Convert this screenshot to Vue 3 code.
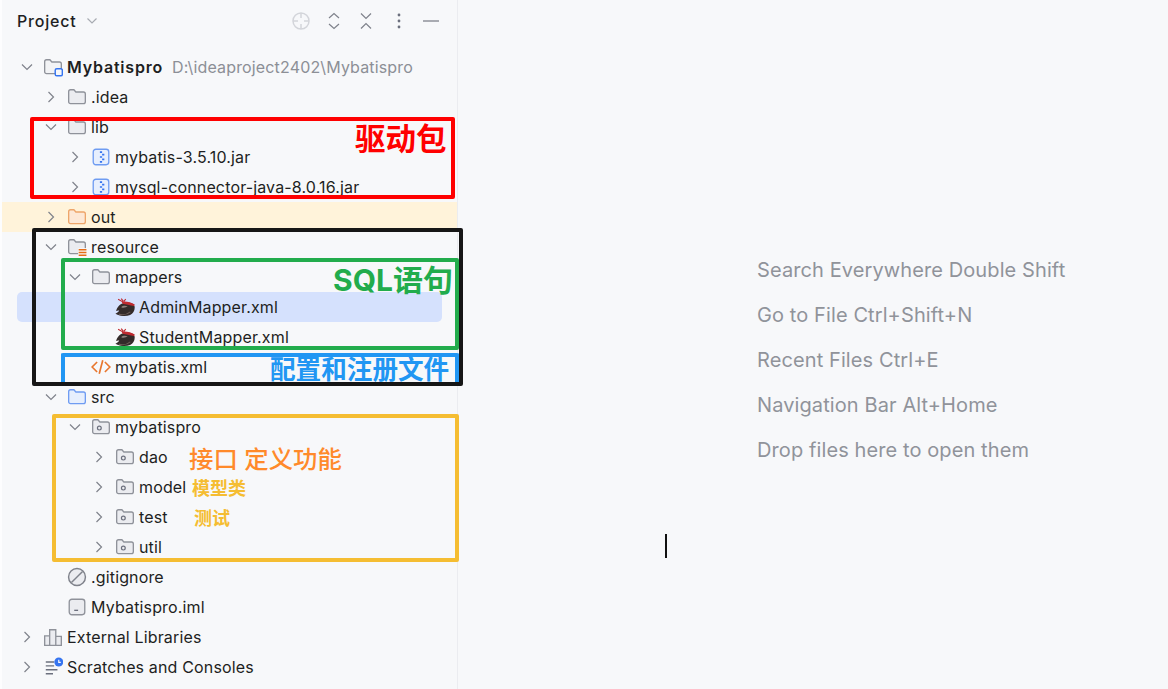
<script setup>
const rows = [
  { level: 0, open: true, icon: 'module', name: 'Mybatispro', bold: true, path: 'D:\\ideaproject2402\\Mybatispro' },
  { level: 1, open: false, icon: 'folder', name: '.idea' },
  { level: 1, open: true, icon: 'folder', name: 'lib' },
  { level: 2, open: false, icon: 'jar', name: 'mybatis-3.5.10.jar' },
  { level: 2, open: false, icon: 'jar', name: 'mysql-connector-java-8.0.16.jar' },
  { level: 1, open: false, icon: 'out', name: 'out', tint: true },
  { level: 1, open: true, icon: 'resource', name: 'resource' },
  { level: 2, open: true, icon: 'folder', name: 'mappers' },
  { level: 3, icon: 'bird', name: 'AdminMapper.xml', selected: true },
  { level: 3, icon: 'bird', name: 'StudentMapper.xml' },
  { level: 2, icon: 'xml', name: 'mybatis.xml' },
  { level: 1, open: true, icon: 'src', name: 'src' },
  { level: 2, open: true, icon: 'package', name: 'mybatispro' },
  { level: 3, open: false, icon: 'package', name: 'dao' },
  { level: 3, open: false, icon: 'package', name: 'model' },
  { level: 3, open: false, icon: 'package', name: 'test' },
  { level: 3, open: false, icon: 'package', name: 'util' },
  { level: 1, icon: 'ignore', name: '.gitignore' },
  { level: 1, icon: 'iml', name: 'Mybatispro.iml' },
  { level: 0, open: false, icon: 'libs', name: 'External Libraries' },
  { level: 0, open: false, icon: 'scratch', name: 'Scratches and Consoles' },
]
const hints = [
  'Search Everywhere Double Shift',
  'Go to File Ctrl+Shift+N',
  'Recent Files Ctrl+E',
  'Navigation Bar Alt+Home',
  'Drop files here to open them',
]
const folderPath = 'M1.5 4.2C1.5 3.3 2.2 2.5 3.2 2.5H6.2L8 4.5H14.8C15.8 4.5 16.5 5.2 16.5 6.2V13.3C16.5 14.3 15.8 15 14.8 15H3.2C2.2 15 1.5 14.3 1.5 13.3Z'
const rowIndent = (level) => ({ paddingLeft: 19 + level * 24 + 'px' })
</script>

<template>
  <div class="page">
    <aside class="side">
      <header class="head">
        <span class="title">Project</span>
        <svg class="title-caret" width="12" height="8" viewBox="0 0 12 8"><path d="M1.5 1.5L6 6L10.5 1.5" /></svg>
        <span class="spacer"></span>
        <div class="tools">
          <svg width="20" height="20" viewBox="0 0 20 20" class="locate"><circle cx="10" cy="10" r="8" /><path d="M10 2V7M10 13V18M2 10H7M13 10H18" /></svg>
          <svg width="14" height="20" viewBox="0 0 14 20" class="tool"><path d="M2 7L7 2.5L12 7M2 13L7 17.5L12 13" /></svg>
          <svg width="14" height="20" viewBox="0 0 14 20" class="tool"><path d="M2 2.5L7 7.5L12 2.5M2 17.5L7 12.5L12 17.5" /></svg>
          <svg width="4" height="16" viewBox="0 0 4 16" class="dots"><circle cx="2" cy="2" r="1.4" /><circle cx="2" cy="8" r="1.4" /><circle cx="2" cy="14" r="1.4" /></svg>
          <svg width="16" height="2" viewBox="0 0 16 2" class="minus"><path d="M0 1H16" /></svg>
        </div>
      </header>

      <div class="tree">
        <div
          v-for="row in rows"
          :key="row.name + row.level"
          class="row"
          :class="{ tint: row.tint, selected: row.selected }"
          :style="rowIndent(row.level)"
        >
          <span class="caret">
            <svg v-if="row.open === true" width="12" height="12" viewBox="0 0 12 12"><path d="M1 3.5L6 8.5L11 3.5" /></svg>
            <svg v-else-if="row.open === false" width="12" height="12" viewBox="0 0 12 12"><path d="M3.5 1L8.5 6L3.5 11" /></svg>
          </span>
          <svg class="ico" width="20" height="20" viewBox="0 0 18 18">
            <template v-if="row.icon === 'folder'">
              <path :d="folderPath" fill="#ebecf0" stroke="#8f929a" stroke-width="1.2" />
            </template>
            <template v-else-if="row.icon === 'module'">
              <path :d="folderPath" fill="#f2f3f5" stroke="#8f929a" stroke-width="1.2" />
              <rect x="11" y="10.5" width="6.4" height="6.4" rx="1.4" fill="#f7f8fa" stroke="#3574f0" stroke-width="1.3" />
            </template>
            <template v-else-if="row.icon === 'out'">
              <path :d="folderPath" fill="#fde8d6" stroke="#eea56a" stroke-width="1.2" />
            </template>
            <template v-else-if="row.icon === 'src'">
              <path :d="folderPath" fill="#e7effd" stroke="#6f9cf2" stroke-width="1.2" />
            </template>
            <template v-else-if="row.icon === 'resource'">
              <path :d="folderPath" fill="#ebecf0" stroke="#8f929a" stroke-width="1.2" />
              <rect x="10" y="10" width="8" height="8" fill="#f7f8fa" />
              <path d="M10.5 11.5H17.5M10.5 14H17.5M10.5 16.5H17.5" stroke="#e66d17" stroke-width="1.3" fill="none" />
            </template>
            <template v-else-if="row.icon === 'package'">
              <path :d="folderPath" fill="#ebecf0" stroke="#8f929a" stroke-width="1.2" />
              <circle cx="7.5" cy="10" r="1.7" fill="none" stroke="#6c707e" stroke-width="1.1" />
            </template>
            <template v-else-if="row.icon === 'jar'">
              <rect x="2" y="2" width="14" height="14" rx="2.4" fill="#e7effd" stroke="#6f9cf2" stroke-width="1.2" />
              <path d="M8 4.6H10M10 6.8H12M8 9H10M10 11.2H12M8 13.4H10" stroke="#3574f0" stroke-width="1.5" fill="none" />
            </template>
            <template v-else-if="row.icon === 'bird'">
              <path d="M0.4 15C2 14.4 3.2 13.4 3.8 12.2C2.8 12 1.8 12.2 1 12.6C2 9 4.8 5.8 8.8 5.2C12.4 4.6 16.6 5.2 17.6 8.4C18.2 11.6 16.6 14.8 13.6 16.2C10 17.6 4.4 17.4 0.4 15Z" fill="#332b2a" />
              <path d="M5.6 9.2C6.8 7.8 9 7.6 11.4 8.4C10 9.6 7.4 10.2 5.6 9.2Z" fill="#8f817d" />
              <path d="M6 4.2C9.5 3.6 14 4.2 17.8 6.8L17.2 8.2C13.6 7.2 9.4 6.6 6.8 6Z" fill="#bf2a30" />
              <path d="M7 4.4L2.8 2M7.6 4L5.6 1.4M8 4.2L9.6 1.8" stroke="#bf2a30" stroke-width="1" fill="none" />
              <path d="M3.4 15.4C7 16.4 11 15.8 13.8 13.4" stroke="#6b5a55" stroke-width="1" fill="none" />
            </template>
            <template v-else-if="row.icon === 'xml'">
              <path d="M5.5 4.5L1 9L5.5 13.5M12.5 4.5L17 9L12.5 13.5" stroke="#e8762d" stroke-width="1.5" fill="none" />
              <path d="M10.6 3L7.4 15" stroke="#e8762d" stroke-width="1.5" fill="none" />
            </template>
            <template v-else-if="row.icon === 'ignore'">
              <circle cx="9" cy="9" r="7.6" fill="#ebecf0" stroke="#7f828b" stroke-width="1.3" />
              <path d="M4 14L14 4" stroke="#7f828b" stroke-width="1.3" fill="none" />
            </template>
            <template v-else-if="row.icon === 'iml'">
              <rect x="2" y="2" width="14" height="14" rx="2.4" fill="#ebecf0" stroke="#8f929a" stroke-width="1.2" />
              <path d="M6.5 12H10" stroke="#6c707e" stroke-width="1.2" fill="none" />
            </template>
            <template v-else-if="row.icon === 'libs'">
              <path d="M1.5 8H6V16.5H1.5ZM6 2.5H11.5V16.5H6ZM11.5 8.5H16.5V16.5H11.5Z" fill="#ebecf0" stroke="#8f929a" stroke-width="1.2" />
            </template>
            <template v-else-if="row.icon === 'scratch'">
              <path d="M2.5 4.5H10M2.5 8H10M2.5 11.5H13M2.5 15H9" stroke="#6c707e" stroke-width="1.3" fill="none" />
              <circle cx="14.2" cy="4.5" r="4" fill="#3574f0" />
              <path d="M14.2 2.4V4.8H16" stroke="#fff" stroke-width="1" fill="none" />
            </template>
          </svg>
          <span class="name" :class="{ bold: row.bold }">{{ row.name }}</span>
          <span v-if="row.path" class="path">{{ row.path }}</span>
        </div>
      </div>

      <div class="mark mark-black"></div>
      <div class="mark mark-blue"></div>
      <div class="mark mark-red"></div>
      <div class="mark mark-green"></div>
      <div class="mark mark-yellow"></div>
      <span class="note note-red">驱动包</span>
      <span class="note note-green">SQL语句</span>
      <span class="note note-blue">配置和注册文件</span>
      <span class="note note-orange">接口 定义功能</span>
      <span class="note note-y1">模型类</span>
      <span class="note note-y2">测试</span>
    </aside>

    <main class="main">
      <p v-for="hint in hints" :key="hint" class="hint">{{ hint }}</p>
      <span class="text-caret"></span>
    </main>
  </div>
</template>

<style>
html, body { margin: 0; background: #f7f8fa; }
</style>

<style scoped>
.page {
  position: relative;
  display: flex;
  width: 1168px;
  height: 689px;
  overflow: hidden;
  background: #f7f8fa;
  font-family: Inter, "Noto Sans CJK SC", sans-serif;
  color: #1e1f22;
}
.side {
  position: relative;
  box-sizing: border-box;
  width: 458px;
  height: 689px;
  border-left: 2px solid #fdfdfe;
  border-right: 1px solid #ebecf0;
  flex: none;
}
.head {
  display: flex;
  align-items: center;
  height: 42px;
  padding: 0 18px 0 15px;
}
.title { font-size: 16px; font-weight: 500; letter-spacing: 0.8px; }
.title-caret { margin-left: 9px; fill: none; stroke: #a8abb2; stroke-width: 1.2; }
.spacer { flex: 1; }
.tools { display: flex; align-items: center; }
.tools svg { fill: none; stroke: #7f828b; stroke-width: 1.2; }
.locate { stroke: #d3d5da !important; stroke-width: 1.5 !important; margin-right: 17px; }
.tool { margin-right: 18px; margin-left: -1px; }
.tool + .tool { margin-right: 24px; margin-left: 0; }
.dots { fill: #6c707e !important; stroke: none !important; margin-right: 22px; }
.minus { stroke: #8f929a !important; stroke-width: 1.5 !important; }
.tree { padding-top: 10px; }
.row {
  position: relative;
  display: flex;
  align-items: center;
  height: 30px;
  font-size: 16px;
  white-space: nowrap;
}
.row > * { position: relative; }
.tint { background: #fff3da; }
.selected::before {
  content: "";
  position: absolute;
  left: 15px;
  right: 15px;
  top: 0;
  bottom: 0;
  border-radius: 5px;
  background: #d5e1fd;
}
.caret { display: flex; justify-content: center; width: 12px; margin-right: 10px; }
.caret svg { fill: none; stroke: #7f828b; stroke-width: 1.2; }
.ico { flex: none; margin-right: 4px; }
.name { letter-spacing: 0.15px; }
.bold { font-weight: 600; letter-spacing: 0.8px; }
.path { margin-left: 9px; color: #8c8f96; letter-spacing: 0.15px; }
.mark { position: absolute; box-sizing: border-box; border-style: solid; border-width: 4px; border-radius: 2px; }
.mark-red { left: 28px; top: 117px; width: 425px; height: 82px; border-color: #ff0000; }
.mark-black { left: 30px; top: 228px; width: 431px; height: 158px; border-color: #161616; z-index: 2; }
.mark-green { left: 59px; top: 258px; width: 398px; height: 92px; border-color: #22ac4c; }
.mark-blue { left: 59px; top: 353px; width: 398px; height: 33px; border-color: #2196f3; border-bottom: none; }
.mark-yellow { left: 50px; top: 414px; width: 407px; height: 148px; border-color: #f5bd32; }
.note { position: absolute; white-space: nowrap; line-height: 1; z-index: 3; }
.note-red { left: 353px; top: 124px; font-size: 30.5px; font-weight: 700; color: #ff0000; }
.note-green { left: 331px; top: 265px; font-size: 30px; font-weight: 700; color: #22ac4c; }
.note-blue { left: 268px; top: 357px; font-size: 25.6px; font-weight: 700; color: #2196f3; }
.note-orange { left: 187px; top: 447px; font-size: 24.4px; font-weight: 500; color: #ff8a2b; }
.note-y1 { left: 190px; top: 480px; font-size: 18px; font-weight: 700; color: #f5bd32; }
.note-y2 { left: 192px; top: 510px; font-size: 18px; font-weight: 700; color: #f5bd32; }
.main {
  position: relative;
  flex: 1;
  box-sizing: border-box;
  padding: 257px 0 0 299px;
}
.hint {
  margin: 0 0 18px;
  height: 27px;
  line-height: 27px;
  font-size: 20px;
  letter-spacing: 0.1px;
  white-space: nowrap;
  color: #90939a;
}
.text-caret {
  position: absolute;
  left: 207px;
  top: 534px;
  width: 2px;
  height: 24px;
  background: #111;
}
</style>
